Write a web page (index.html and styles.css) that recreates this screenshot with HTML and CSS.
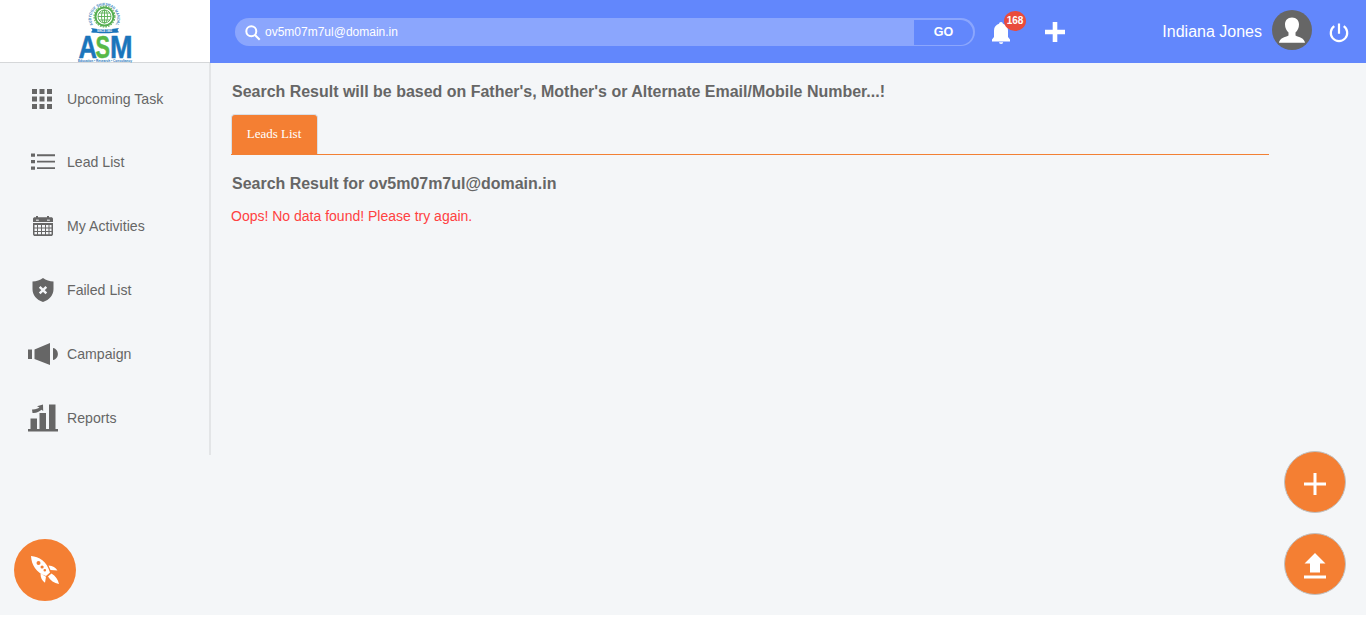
FILE: index.html
```html
<!DOCTYPE html>
<html lang="en">
<head>
<meta charset="utf-8">
<title>Search Result</title>
<link rel="stylesheet" href="styles.css">
</head>
<body>
<div class="app">
  <header class="header">
    <a class="logo">
      <svg width="60" height="63" viewBox="75 0 60 63">
        <defs><path id="ring" d="M93 25A13 13 0 1 1 115.500 25"/></defs>
        <text class="logo-ring" textLength="54" lengthAdjust="spacingAndGlyphs"><textPath href="#ring">AUDYOGIK SHIKSHAN MANDAL</textPath></text>
        <circle cx="104.500" cy="16.500" r="10.400" fill="none" stroke="#62b15a" stroke-width="1.200" stroke-dasharray="1.700 1.050"/>
        <circle cx="104.500" cy="16.500" r="9" fill="none" stroke="#55ae50" stroke-width="2"/>
        <g fill="none" stroke="#55ae50" stroke-width="0.900"><circle cx="104.500" cy="16.500" r="6.500"/><ellipse cx="104.500" cy="16.500" rx="3" ry="6.500"/><path d="M104.500 10v13M98 16.500h13M99 13h11M99 20h11"/></g>
        <path d="M91 28q13 2.500 28 0l-1.500 2 1.500 2.200q-3 .6-5 .5-10 1-18 0-3 .1-5-.5l1.500-2.200z" fill="#1b75bb"/>
        <text class="logo-since" x="97" y="32" textLength="15" lengthAdjust="spacingAndGlyphs">SINCE 1983</text>
        <g class="logo-name">
          <text x="78.500" y="57.500" textLength="18.500" lengthAdjust="spacingAndGlyphs">A</text>
          <text class="green" x="95.500" y="57.500" textLength="14.500" lengthAdjust="spacingAndGlyphs">S</text>
          <text x="110" y="57.500" textLength="22.500" lengthAdjust="spacingAndGlyphs">M</text>
        </g>
        <text class="logo-tag" x="78" y="62" textLength="54" lengthAdjust="spacingAndGlyphs">Education • Research • Consultancy</text>
      </svg>
    </a>
    <div class="topbar">
      <form class="search">
        <label class="field">
          <svg width="16" height="16" viewBox="0 0 16 16" fill="none" stroke="#fff" stroke-width="2"><circle cx="6.300" cy="6.300" r="5"/><path d="M10 10l4.700 4.700"/></svg>
          <span class="query">ov5m07m7ul@domain.in</span>
        </label>
        <button class="go" type="button">GO</button>
      </form>
      <div class="bell">
        <svg width="18" height="22" viewBox="0 0 18 22" fill="#fff"><path d="M9 0a2 2 0 0 1 2 1.800c3 .9 5 3.200 5 6.700v6.500l2 2.500v2H0v-2l2-2.500V8.500C2 5 4 2.700 7 1.800A2 2 0 0 1 9 0zM7 20.300h4.200a2.100 1.700 0 0 1-4.200 0z"/></svg>
        <span class="badge">168</span>
      </div>
      <svg class="add" width="20" height="20" viewBox="0 0 20 20"><path d="M7.700 0h4.600v7.700H20v4.600h-7.700V20H7.700v-7.700H0V7.700h7.700z" fill="#fff"/></svg>
      <span class="user">Indiana Jones</span>
      <svg class="avatar" width="40" height="40" viewBox="0 0 40 40"><circle cx="20" cy="20" r="20" fill="#666"/><path d="M20 7.500c4.500 0 7 3 7 7 0 3.500-1.500 6-3.500 8v3c3.500 1.800 9 2.500 9.500 7.300H7c.5-4.800 6-5.500 9.500-7.300v-3c-2-2-3.500-4.500-3.500-8 0-4 2.500-7 7-7z" fill="#fff"/></svg>
      <svg class="power" width="20" height="20" viewBox="0 0 20 20" fill="none" stroke="#fff" stroke-width="2.200"><path d="M10 .5v10.200M5.300 3.200a8.200 8.200 0 1 0 9.400 0"/></svg>
    </div>
  </header>
  <div class="body">
    <nav class="sidebar">
      <a class="item"><svg class="icon" viewBox="0 0 30 30"><path d="M4 5h5v5H4zM11.500 5h5v5h-5zM19 5h5v5h-5zM4 12.500h5v5H4zM11.500 12.500h5v5h-5zM19 12.500h5v5h-5zM4 20h5v5H4zM11.500 20h5v5h-5zM19 20h5v5h-5z"/></svg><span>Upcoming Task</span></a>
      <a class="item list"><svg class="icon" viewBox="0 0 30 30"><path d="M3 6.500h4v3.200H3zM9 7.300h18v1.900H9zM3 13h4v3.200H3zM9 13.700h18v1.900H9zM3 19.500h4v3.200H3zM9 20.200h18v1.900H9z"/></svg><span>Lead List</span></a>
      <a class="item"><svg class="icon" viewBox="0 0 30 30"><path fill-rule="evenodd" d="M6 6.200h2V5h2v1.200h9V5h2v1.200h3l1 1.300V11H5V7.500zM5 12h20v11.500L24 25H6l-1-1.500zM6.500 14v2.500H9V14zm3.500 0v2.500h3V14zm4 0v2.500h3V14zm4 0v2.500h2.500V14zm3.500 0v2.500h2V14zM6.500 17.500V20H9v-2.500zm3.500 0V20h3v-2.500zm4 0V20h3v-2.500zm4 0V20h2.500v-2.500zm3.500 0V20h2v-2.500zM6.500 21v2.300H9V21zm3.500 0v2.300h3V21zm4 0v2.300h3V21zm4 0v2.300h2.500V21zm3.500 0v2.300h2V21z"/><path class="light" d="M8 9.200h2.800M19 9.200h2.800"/></svg><span>My Activities</span></a>
      <a class="item"><svg class="icon" viewBox="0 0 30 30"><path d="M15 3c3 2.400 6.500 3.400 10.500 3.500V14c0 6-4 11-10.500 13C8.500 25 4.500 20 4.500 14V6.500C8.500 6.400 12 5.400 15 3z"/><path class="cross" d="M11.700 11.800l6.600 6.600M18.300 11.800l-6.600 6.600"/></svg><span>Failed List</span></a>
      <a class="item"><svg class="icon" viewBox="0 0 30 30"><path d="M0 10.500h4v9.500H0zM6.500 10.500L22 4v22L6.500 20zM25 9c6.500 1 6.500 11 0 12z"/></svg><span>Campaign</span></a>
      <a class="item"><svg class="icon" viewBox="0 0 30 30"><path d="M0 26h2.500V15.500h6.500V26h2.500V10h6.500v16H21V1.500h6.500V26H30v2.500H0zM4 6.500c4 .2 5.500-1 7.500-2L9 3.300 15 1.500l.2 6.500-1.700-1.200C11 9 8.500 10.300 4.500 10z"/></svg><span>Reports</span></a>
    </nav>
    <main class="content">
      <h1 class="title">Search Result will be based on Father's, Mother's or Alternate Email/Mobile Number...!</h1>
      <div class="tabs"><a class="tab">Leads List</a></div>
      <h2 class="title result">Search Result for ov5m07m7ul@domain.in</h2>
      <p class="error">Oops! No data found! Please try again.</p>
    </main>
  </div>
  <a class="fab rocket"><svg width="62" height="62" viewBox="0 0 62 62"><path fill="#fff" fill-rule="evenodd" d="M17 17c8 .5 16 5.500 19 16.500l-4 3.500C22 33.500 17.500 26 17 17zm5.500 7a2 2 0 1 0 4 0 2 2 0 0 0-4 0zm4 4a1.600 1.600 0 1 0 3.200 0 1.600 1.600 0 0 0-3.200 0zm3 3.300a1.300 1.300 0 1 0 2.600 0 1.300 1.300 0 0 0-2.600 0zM34.500 26.500c4.500.3 7 2 9 5l-7-.5zM26.500 34.500l5.500 3.300-1 6c-3-2.300-4.500-5-4.500-9.300zM34 37.500l3.500-3c4 2.500 6.500 6 7.500 10.500-5-1-8.500-3.500-11-7.500z"/></svg></a>
  <div class="actions">
    <a class="fab ring"><svg width="22" height="22" viewBox="0 0 22 22"><path d="M9.500 0h3v9.500H22v3h-9.500V22h-3v-9.500H0v-3h9.500z" fill="#fff"/></svg></a>
    <a class="fab ring"><svg width="22" height="26" viewBox="0 0 22 26"><path d="M11 0l10.500 10.500H16v9H6v-9H.5zM0 22.500h22v3H0z" fill="#fff"/></svg></a>
  </div>
</div>
</body>
</html>
```
FILE: styles.css
```css
* { box-sizing: border-box; }
body { margin: 0; background: #fff; font-family: "Liberation Sans", Arial, sans-serif; color: #666; }
.app { height: 615px; background: #f4f6f8; }
.header { display: flex; height: 63px; }
.logo { width: 210px; padding-left: 75px; background: #fff; border-bottom: 1px solid #d5d7d9; }
.logo svg { display: block; overflow: visible; }
.logo-ring { font-size: 4px; font-weight: bold; fill: #3b83bd; }
.logo-since { font-size: 3px; font-weight: bold; fill: #fff; }
.logo-name { font: bold 31px "Liberation Sans", Arial, sans-serif; fill: #1b75bb; stroke: #1b75bb; stroke-width: 0.500px; }
.green { fill: #58b947; stroke: #58b947; }
.logo-tag { font-size: 3.800px; font-weight: bold; fill: #1b75bb; }
.topbar { flex: 1; display: flex; align-items: center; background: #6287fc; padding-left: 25px; color: #fff; }
.search { display: flex; width: 740px; height: 28px; border-radius: 14px; background: #8ba6fd; padding: 2px 2px 1px 10px; margin-top: 1px; }
.field { flex: 1; display: flex; align-items: center; gap: 4px; font-size: 12px; }
.query { padding-bottom: 2px; }
.go { width: 59px; border: 0; border-radius: 0 13px 13px 0; padding: 0 0 2px; background: #6287fc; color: #fff; font: bold 12.500px "Liberation Sans", Arial, sans-serif; }
.bell { position: relative; margin: 3px 0 0 17px; height: 22px; }
.badge { position: absolute; left: 12px; top: -11px; width: 22px; height: 20px; border-radius: 50%; background: #e94b3c; font: bold 10px/20px "Liberation Sans", Arial, sans-serif; text-align: center; }
.add { margin: 1px 0 0 35px; }
.user { margin-left: auto; font-size: 16px; }
.avatar { margin: -3px 0 0 10px; }
.power { margin: 2px 17px 0; }
.body { display: flex; }
.sidebar { width: 211px; height: 392px; padding-top: 4px; border-right: 2px solid #e3e5e7; }
.item { display: flex; align-items: center; height: 63.800px; gap: 9px; padding-left: 28px; font-size: 14.130px; }
.list { padding-bottom: 2px; }
.icon { width: 30px; height: 30px; fill: #666; }
.light { stroke: #f4f6f8; stroke-width: 1px; }
.cross { stroke: #f4f6f8; stroke-width: 2.400px; }
.content { padding: 20px 0 0 20px; }
.title { margin: 0 0 0 1px; font-size: 15.970px; line-height: 18px; font-weight: bold; }
.tabs { width: 1038px; height: 41px; margin-top: 13px; border-bottom: 1px solid #f28034; }
.tab { display: block; width: 87px; height: 40px; padding-right: 1px; border: 1px solid #d9dfe6; border-bottom: 0; border-radius: 4px 4px 0 0; background: #f47f33; color: #fff; font: 13px/38px "Liberation Serif", "Times New Roman", serif; text-align: center; }
.result { margin-top: 20px; }
.error { margin: 15px 0 0; font-size: 14px; line-height: 17px; color: #ff4141; }
.fab { display: flex; align-items: center; justify-content: center; width: 62px; height: 62px; border-radius: 50%; background: #f47f33; }
.ring { border: 1px solid #bfc0c1; }
.rocket { position: fixed; left: 14px; top: 539px; }
.actions { position: fixed; right: 20px; top: 451px; display: flex; flex-direction: column; gap: 20px; }
.actions svg { margin-top: 4px; }
```
